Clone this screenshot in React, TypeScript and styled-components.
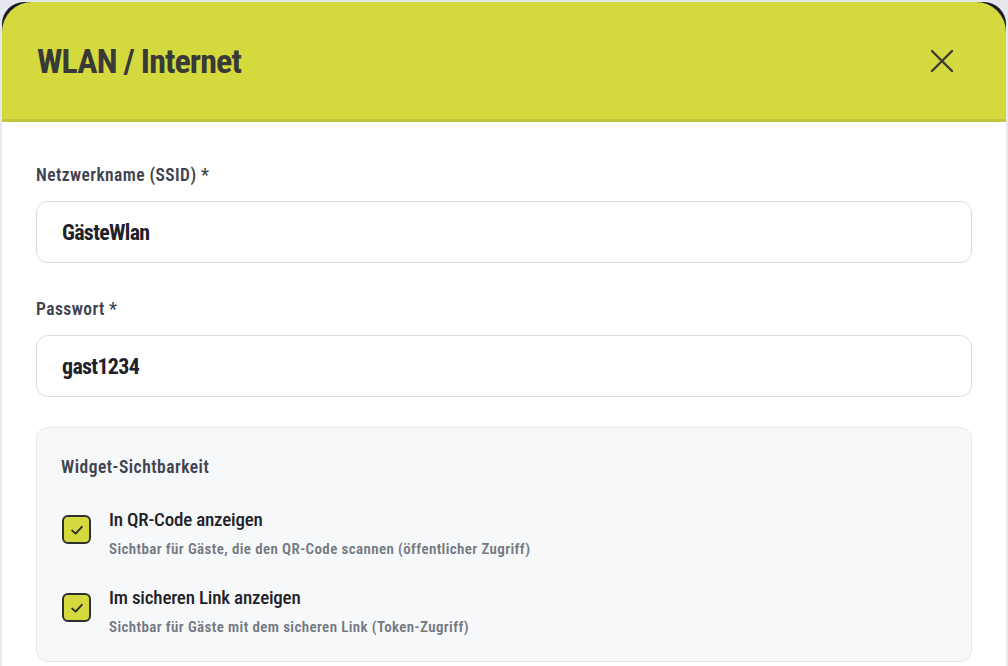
import { createGlobalStyle, styled } from "styled-components";

const FONT = `Roboto, "Liberation Sans", sans-serif`;

const GlobalStyle = createGlobalStyle`
  html, body {
    margin: 0;
    padding: 0;
    background: #e7e7ee;
  }
  * {
    box-sizing: border-box;
  }
  body {
    font-family: ${FONT};
    font-stretch: condensed;
  }
`;

interface OptionProps {
  title: string;
  hint: string;
}

const options: OptionProps[] = [
  {
    title: "In QR-Code anzeigen",
    hint: "Sichtbar für Gäste, die den QR-Code scannen (öffentlicher Zugriff)",
  },
  {
    title: "Im sicheren Link anzeigen",
    hint: "Sichtbar für Gäste mit dem sicheren Link (Token-Zugriff)",
  },
];

const CheckIcon = () => (
  <svg width="14" height="14" viewBox="0 0 14 14" fill="none">
    <polyline
      points="2.2,7.6 5.6,10.6 11.8,3.8"
      stroke="#2a2a2a"
      strokeWidth="1.9"
      strokeLinecap="round"
      strokeLinejoin="round"
    />
  </svg>
);

const CloseIcon = () => (
  <svg width="24" height="24" viewBox="0 0 24 24" fill="none">
    <path
      d="M2 2 L22 22 M22 2 L2 22"
      stroke="#3a3a36"
      strokeWidth="2.4"
      strokeLinecap="round"
    />
  </svg>
);

const App = () => {
  return (
    <>
      <GlobalStyle />
      <FrameStyled>
        <ModalStyled>
          <HeaderStyled>
            <TitleStyled>WLAN / Internet</TitleStyled>
            <CloseBtnStyled aria-label="Schließen">
              <CloseIcon />
            </CloseBtnStyled>
          </HeaderStyled>
          <BodyStyled>
            <FieldStyled>
              <LabelStyled>Netzwerkname (SSID) *</LabelStyled>
              <InputStyled defaultValue="GästeWlan" />
            </FieldStyled>
            <FieldStyled>
              <LabelStyled>Passwort *</LabelStyled>
              <InputStyled defaultValue="gast1234" />
            </FieldStyled>
            <VisibilityBoxStyled>
              <BoxTitleStyled>Widget-Sichtbarkeit</BoxTitleStyled>
              <OptionListStyled>
                {options.map((opt) => (
                  <OptionStyled key={opt.title}>
                    <CheckboxStyled>
                      <CheckIcon />
                    </CheckboxStyled>
                    <OptionTextStyled>
                      <OptionTitleStyled>{opt.title}</OptionTitleStyled>
                      <OptionHintStyled>{opt.hint}</OptionHintStyled>
                    </OptionTextStyled>
                  </OptionStyled>
                ))}
              </OptionListStyled>
            </VisibilityBoxStyled>
          </BodyStyled>
        </ModalStyled>
      </FrameStyled>
    </>
  );
};

const FrameStyled = styled.div`
  width: 1008px;
  height: 666px;
  padding: 2px 2px 0 2px;
  background: #e7e7ee;
  overflow: hidden;
`;

const ModalStyled = styled.div`
  height: 100%;
  background: #1d1c2c;
  border-radius: 22px 22px 0 0;
  overflow: hidden;
  display: flex;
  flex-direction: column;
`;

const HeaderStyled = styled.div`
  height: 120px;
  flex-shrink: 0;
  background: #d4da3d;
  border-radius: 30px 30px 0 0;
  border-bottom: 3px solid #c1c73a;
  display: flex;
  align-items: center;
  justify-content: space-between;
  padding: 0 52px 0 35px;
`;

const TitleStyled = styled.h1`
  margin: 0;
  font-family: ${FONT};
  font-stretch: condensed;
  font-size: 34px;
  font-weight: 700;
  letter-spacing: -0.9px;
  color: #393a38;
`;

const CloseBtnStyled = styled.button`
  background: none;
  border: none;
  padding: 0;
  width: 24px;
  height: 24px;
  display: flex;
  align-items: center;
  justify-content: center;
  cursor: pointer;
`;

const BodyStyled = styled.div`
  flex: 1;
  background: #ffffff;
  padding: 43px 34px 0 34px;
  display: flex;
  flex-direction: column;
  gap: 36px;
`;

const FieldStyled = styled.div`
  display: flex;
  flex-direction: column;
  gap: 16px;
`;

const LabelStyled = styled.label`
  font-family: ${FONT};
  font-stretch: condensed;
  font-size: 17.5px;
  line-height: 20px;
  font-weight: 600;
  letter-spacing: 0.42px;
  color: #404450;
`;

const InputStyled = styled.input`
  height: 62px;
  width: 100%;
  border: 1px solid #d8dbe0;
  border-radius: 12px;
  padding: 0 25px;
  font-family: ${FONT};
  font-stretch: condensed;
  font-size: 22px;
  font-weight: 700;
  letter-spacing: -0.7px;
  color: #1f2229;
  background: #ffffff;
  outline: none;
`;

const VisibilityBoxStyled = styled.div`
  margin-top: -6px;
  background: #f7f8fa;
  border: 1px solid #e4e6ea;
  border-radius: 12px;
  padding: 29px 24px 25px 24px;
`;

const BoxTitleStyled = styled.div`
  font-family: ${FONT};
  font-stretch: condensed;
  font-size: 17.5px;
  line-height: 20px;
  font-weight: 600;
  letter-spacing: 0.5px;
  color: #404450;
`;

const OptionListStyled = styled.div`
  margin-top: 32px;
  display: flex;
  flex-direction: column;
  gap: 29px;
`;

const OptionStyled = styled.div`
  display: flex;
  align-items: flex-start;
  gap: 18px;
`;

const CheckboxStyled = styled.div`
  margin: 6px 0 0 1px;
  width: 29px;
  height: 29px;
  flex-shrink: 0;
  border: 2.5px solid #2f2f2f;
  border-radius: 6px;
  background: #d4da3d;
  display: flex;
  align-items: center;
  justify-content: center;
`;

const OptionTextStyled = styled.div`
  display: flex;
  flex-direction: column;
  gap: 9px;
`;

const OptionTitleStyled = styled.div`
  font-family: ${FONT};
  font-stretch: condensed;
  font-size: 19px;
  line-height: 22px;
  font-weight: 500;
  letter-spacing: -0.2px;
  color: #1f2229;
`;

const OptionHintStyled = styled.div`
  font-family: ${FONT};
  font-stretch: condensed;
  font-size: 15px;
  line-height: 18px;
  font-weight: 600;
  letter-spacing: 0.38px;
  color: #737881;
`;

export default App;
